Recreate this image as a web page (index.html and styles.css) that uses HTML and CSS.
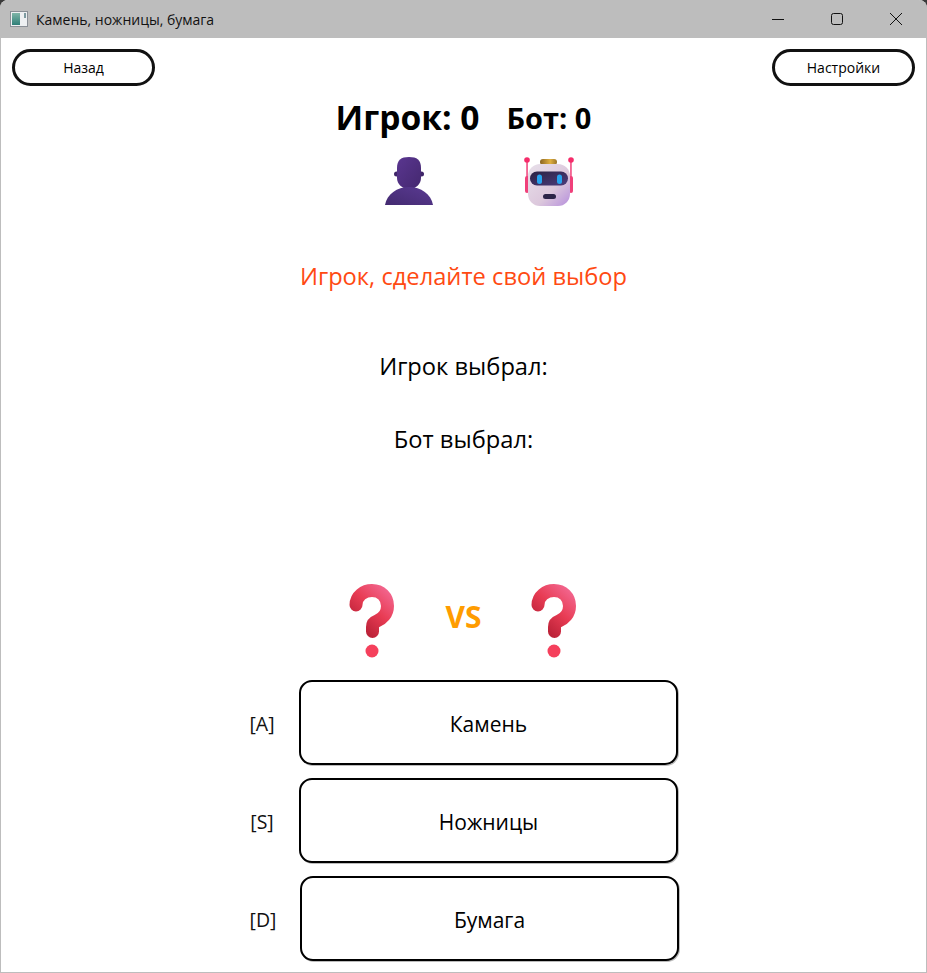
FILE: index.html
```html
<!DOCTYPE html>
<html>
  <head>
    <title>Камень, ножницы, бумага</title>
    <meta charset="utf-8" />
    <link rel="stylesheet" href="styles.css">
  </head>
  <body>
    <div class="window">
      <div class="titlebar">
        <svg class="app-icon" width="18" height="16" viewBox="0 0 18 16">
          <defs>
            <linearGradient id="appFill" x1="0" y1="0" x2="0" y2="1">
              <stop offset="0" stop-color="#7fb5a8" />
              <stop offset="1" stop-color="#2f7f78" />
            </linearGradient>
          </defs>
          <rect x="0.5" y="0.5" width="17" height="15" fill="#eef0f2" stroke="#8a8f96" />
          <rect x="2" y="2" width="8" height="12" fill="url(#appFill)" />
          <rect x="14" y="2" width="2" height="5" fill="#7d9aa0" />
        </svg>
        <span class="title">Камень, ножницы, бумага</span>
        <div class="controls">
          <svg width="14" height="14" viewBox="0 0 14 14"><path d="M1 7.5h12" stroke="#111" fill="none" /></svg>
          <svg width="14" height="14" viewBox="0 0 14 14"><rect x="1.5" y="1.5" width="11" height="11" rx="2" stroke="#111" fill="none" /></svg>
          <svg width="14" height="14" viewBox="0 0 14 14"><path d="M1 1l12 12M13 1L1 13" stroke="#111" fill="none" /></svg>
        </div>
      </div>

      <div class="content">
        <div class="topbar">
          <button class="pill">Назад</button>
          <button class="pill">Настройки</button>
        </div>

        <div class="scores">
          <div class="score-player">Игрок: 0</div>
          <div class="score-bot">Бот: 0</div>
        </div>

        <div class="avatars">
          <svg width="50" height="50" viewBox="0 0 50 50">
            <defs>
              <linearGradient id="personFill" x1="0" y1="0" x2="1" y2="1">
                <stop offset="0" stop-color="#5a3690" />
                <stop offset="1" stop-color="#44286f" />
              </linearGradient>
              <linearGradient id="shoulderFill" x1="0" y1="1" x2="1" y2="0">
                <stop offset="0" stop-color="#432a70" />
                <stop offset="1" stop-color="#5a3a92" />
              </linearGradient>
            </defs>
            <circle cx="11.500" cy="18" r="2.500" fill="#3f2568" />
            <circle cx="36.500" cy="18" r="2.500" fill="#3f2568" />
            <path d="M12 12C12 4 16 1 24 1s12 3 12 11v10c0 6-5 11-12 11s-12-5-12-11z" fill="url(#personFill)" />
            <path d="M0 49C2 38 12 31 24 31s22 7 24 18z" fill="url(#shoulderFill)" />
          </svg>
          <svg width="50" height="52" viewBox="0 0 50 52">
            <defs>
              <linearGradient id="botBody" x1="0" y1="0" x2="1" y2="1">
                <stop offset="0" stop-color="#e8e0ea" />
                <stop offset="0.6" stop-color="#dcc8dc" />
                <stop offset="1" stop-color="#b68fdc" />
              </linearGradient>
              <linearGradient id="botFace" x1="0" y1="0" x2="1" y2="1">
                <stop offset="0" stop-color="#2a2244" />
                <stop offset="1" stop-color="#4c3c7c" />
              </linearGradient>
              <linearGradient id="botCrown" x1="0" y1="0" x2="1" y2="0">
                <stop offset="0" stop-color="#8a6420" />
                <stop offset="0.6" stop-color="#e0b040" />
                <stop offset="1" stop-color="#9a7428" />
              </linearGradient>
            </defs>
            <rect x="2.3" y="4" width="1.5" height="18" fill="#f0407a" />
            <rect x="46.2" y="4" width="1.5" height="18" fill="#f0407a" />
            <circle cx="3" cy="4" r="2.8" fill="#f52c6a" />
            <circle cx="47" cy="4" r="2.8" fill="#f52c6a" />
            <rect x="1" y="20" width="4" height="17" rx="2" fill="#f0407a" />
            <rect x="45" y="20" width="4" height="17" rx="2" fill="#f0407a" />
            <rect x="16" y="3" width="17" height="6" rx="3" fill="url(#botCrown)" />
            <rect x="4" y="8" width="42" height="42" rx="12" fill="url(#botBody)" />
            <rect x="6" y="15.500" width="38" height="14" rx="7" fill="url(#botFace)" />
            <rect x="13" y="18.500" width="5" height="9.500" rx="2.500" fill="#27a3ee" />
            <rect x="33" y="18.500" width="5" height="9.500" rx="2.500" fill="#27a3ee" />
            <rect x="19" y="38" width="13" height="5" rx="2.5" fill="#2c2448" />
          </svg>
        </div>

        <div class="prompt">Игрок, сделайте свой выбор</div>
        <div class="choice choice-player">Игрок выбрал:</div>
        <div class="choice choice-bot">Бот выбрал:</div>

        <div class="versus">
          <svg class="question" width="50" height="74" viewBox="0 0 50 74">
            <defs>
              <linearGradient id="qFill" x1="1" y1="0" x2="0.3" y2="1">
                <stop offset="0" stop-color="#f2648c" />
                <stop offset="0.5" stop-color="#e83c54" />
                <stop offset="1" stop-color="#bc2238" />
              </linearGradient>
            </defs>
            <path d="M8 21C8 12 16 6.5 24 6.5c9 0 15.500 6.500 15.500 15.500 0 8-5.500 13-10.500 15-4 1.500-4.500 4-4.500 6v4.500" fill="none" stroke="url(#qFill)" stroke-width="13" stroke-linecap="round" stroke-linejoin="round" />
            <circle cx="24" cy="67" r="6.5" fill="#f5405c" />
          </svg>
          <div class="vs">VS</div>
          <svg class="question" width="50" height="74" viewBox="0 0 50 74">
            <path d="M8 21C8 12 16 6.5 24 6.5c9 0 15.500 6.500 15.500 15.500 0 8-5.500 13-10.500 15-4 1.500-4.500 4-4.500 6v4.500" fill="none" stroke="url(#qFill)" stroke-width="13" stroke-linecap="round" stroke-linejoin="round" />
            <circle cx="24" cy="67" r="6.5" fill="#f5405c" />
          </svg>
        </div>

        <div class="moves">
          <div class="move">
            <span class="key">[A]</span>
            <button class="move-btn">Камень</button>
          </div>
          <div class="move">
            <span class="key">[S]</span>
            <button class="move-btn">Ножницы</button>
          </div>
          <div class="move move-last">
            <span class="key">[D]</span>
            <button class="move-btn">Бумага</button>
          </div>
        </div>
      </div>
    </div>
  </body>
</html>
```

FILE: styles.css
```css
html,
body {
  margin: 0;
  padding: 0;
  background: #3a3a3a;
}

body {
  font-family: "Open Sans", "Noto Sans", sans-serif;
  color: #000;
  width: 927px;
  height: 973px;
  overflow: hidden;
}

.window {
  height: 973px;
  background: #fff;
  border-radius: 8px 8px 0 0;
  box-sizing: border-box;
  border: 1px solid #bdbdbd;
  border-top: none;
  display: flex;
  flex-direction: column;
}

.titlebar {
  height: 38px;
  flex-shrink: 0;
  margin: 0 -1px;
  background: #bdbdbd;
  border-radius: 8px 8px 0 0;
  display: flex;
  align-items: center;
  padding-left: 10px;
}

.app-icon {
  margin-right: 8px;
}

.title {
  font-size: 14px;
  color: #111;
}

.controls {
  margin-left: auto;
  margin-right: 24px;
  display: flex;
  gap: 45px;
}

.content {
  flex: 1;
  padding: 11px 11px 0;
  display: flex;
  flex-direction: column;
  align-items: center;
}

.topbar {
  align-self: stretch;
  display: flex;
  justify-content: space-between;
}

button {
  font-family: inherit;
  color: #000;
  background: #fff;
  cursor: pointer;
}

.pill {
  width: 143px;
  height: 37px;
  border: 3px solid #111;
  border-radius: 19px;
  font-size: 14px;
  padding: 0;
}

.scores {
  display: flex;
  align-items: center;
  gap: 27px;
  height: 58px;
  margin-top: 2px;
  font-weight: 700;
}

.score-player {
  font-size: 33.6px;
}

.score-bot {
  font-size: 29px;
}

.avatars {
  display: flex;
  gap: 89px;
  margin-top: 10px;
  margin-left: 31px;
  height: 52px;
}

.prompt {
  font-size: 23.7px;
  color: #ff4a12;
  margin-top: 51px;
  line-height: 34px;
}

.choice {
  font-size: 23.7px;
  line-height: 34px;
}

.choice-player {
  margin-top: 56px;
}

.choice-bot {
  margin-top: 39px;
}

.versus {
  display: flex;
  align-items: center;
  gap: 47px;
  margin-top: 128px;
  height: 74px;
}

.vs {
  font-size: 30px;
  font-weight: 700;
  color: #ff9c00;
  width: 38px;
  text-align: center;
  margin-bottom: 10px;
}

.moves {
  display: flex;
  flex-direction: column;
  gap: 13px;
  margin-top: 22px;
  align-self: flex-start;
  margin-left: 225px;
}

.move {
  display: flex;
  align-items: center;
}

.move-last {
  margin-left: 1px;
}

.key {
  width: 50px;
  margin-right: 12px;
  padding-top: 2px;
  text-align: center;
  font-size: 19.5px;
  color: #111;
}

.move-btn {
  width: 379px;
  height: 85px;
  border: 2px solid #000;
  border-radius: 13px;
  box-shadow: 1px 1px 0 #bbb;
  font-size: 21px;
  padding: 2px 0 0;
}
```
